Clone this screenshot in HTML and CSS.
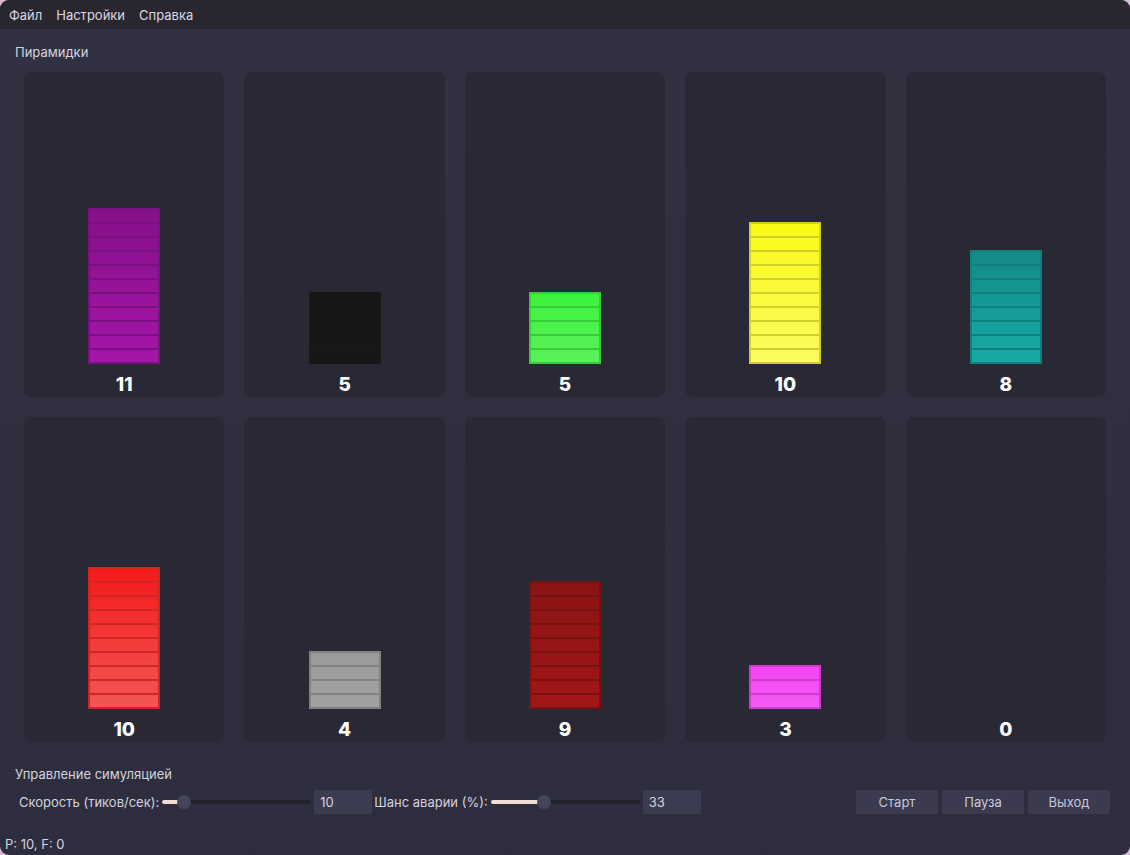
FILE: index.html
```html
<!DOCTYPE html>
<html lang="ru">
<head>
<meta charset="utf-8">
<title>Пирамидки</title>
<link rel="stylesheet" href="styles.css">
</head>
<body>
<div class="window">
  <div class="menubar">
    <span class="menu-item">Файл</span>
    <span class="menu-item">Настройки</span>
    <span class="menu-item">Справка</span>
  </div>
  <div class="content">
    <div class="group-title">Пирамидки</div>
    <div class="grid">
      <div class="card">
        <div class="stack c-purple">
          <div class="blk"></div><div class="blk"></div><div class="blk"></div><div class="blk"></div><div class="blk"></div><div class="blk"></div><div class="blk"></div><div class="blk"></div><div class="blk"></div><div class="blk"></div><div class="blk"></div>
        </div>
        <div class="count">11</div>
      </div>
      <div class="card">
        <div class="stack c-black">
          <div class="blk"></div><div class="blk"></div><div class="blk"></div><div class="blk"></div><div class="blk"></div>
        </div>
        <div class="count">5</div>
      </div>
      <div class="card">
        <div class="stack c-green">
          <div class="blk"></div><div class="blk"></div><div class="blk"></div><div class="blk"></div><div class="blk"></div>
        </div>
        <div class="count">5</div>
      </div>
      <div class="card">
        <div class="stack c-yellow">
          <div class="blk"></div><div class="blk"></div><div class="blk"></div><div class="blk"></div><div class="blk"></div><div class="blk"></div><div class="blk"></div><div class="blk"></div><div class="blk"></div><div class="blk"></div>
        </div>
        <div class="count">10</div>
      </div>
      <div class="card">
        <div class="stack c-teal">
          <div class="blk"></div><div class="blk"></div><div class="blk"></div><div class="blk"></div><div class="blk"></div><div class="blk"></div><div class="blk"></div><div class="blk"></div>
        </div>
        <div class="count">8</div>
      </div>
      <div class="card">
        <div class="stack c-red">
          <div class="blk"></div><div class="blk"></div><div class="blk"></div><div class="blk"></div><div class="blk"></div><div class="blk"></div><div class="blk"></div><div class="blk"></div><div class="blk"></div><div class="blk"></div>
        </div>
        <div class="count">10</div>
      </div>
      <div class="card">
        <div class="stack c-grey">
          <div class="blk"></div><div class="blk"></div><div class="blk"></div><div class="blk"></div>
        </div>
        <div class="count">4</div>
      </div>
      <div class="card">
        <div class="stack c-darkred">
          <div class="blk"></div><div class="blk"></div><div class="blk"></div><div class="blk"></div><div class="blk"></div><div class="blk"></div><div class="blk"></div><div class="blk"></div><div class="blk"></div>
        </div>
        <div class="count">9</div>
      </div>
      <div class="card">
        <div class="stack c-magenta">
          <div class="blk"></div><div class="blk"></div><div class="blk"></div>
        </div>
        <div class="count">3</div>
      </div>
      <div class="card">
        <div class="count">0</div>
      </div>
    </div>

    <div class="group-title second">Управление симуляцией</div>
    <div class="controls">
      <span class="ctl-label">Скорость (тиков/сек):</span>
      <div class="slider">
        <div class="track"></div>
        <div class="fill" style="width: 22px"></div>
        <div class="handle" style="left: 15px"></div>
      </div>
      <div class="field">10</div>
      <span class="ctl-label">Шанс аварии (%):</span>
      <div class="slider">
        <div class="track"></div>
        <div class="fill" style="width: 53px"></div>
        <div class="handle" style="left: 46px"></div>
      </div>
      <div class="field">33</div>
      <div class="spacer"></div>
      <div class="btn">Старт</div>
      <div class="btn">Пауза</div>
      <div class="btn">Выход</div>
    </div>
  </div>
  <div class="status">P: 10, F: 0</div>
</div>
</body>
</html>
```

FILE: styles.css
```css
html, body {
  margin: 0;
  padding: 0;
  height: 100%;
}
body {
  background: #d9b8d2;
  font-family: "Inter", "Noto Sans", "DejaVu Sans", sans-serif;
  font-size: 13px;
  color: #d4d3e0;
}
.window {
  width: 1130px;
  height: 855px;
  display: flex;
  flex-direction: column;
  border-radius: 9px;
  overflow: hidden;
  background: linear-gradient(180deg, #323142 0%, #2e2d3d 100%);
}
.menubar {
  height: 29px;
  flex: none;
  display: flex;
  align-items: center;
  padding-left: 2px;
  background: #29262f;
}
.menu-item {
  padding: 0 7px;
  line-height: 16px;
  color: #dad8e4;
}
.content {
  padding: 15px 15px 0 15px;
  display: flex;
  flex-direction: column;
}
.group-title {
  line-height: 16px;
  height: 16px;
  color: #d4d3df;
}
.group-title.second {
  margin-top: 24px;
}
.grid {
  margin: 12px 9px 0 9px;
  display: grid;
  grid-template-columns: repeat(5, 1fr);
  grid-auto-rows: 325px;
  gap: 20px;
}
.card {
  background: #292935;
  border-radius: 8px;
  display: flex;
  flex-direction: column;
  align-items: center;
  justify-content: flex-end;
  padding-bottom: 1px;
}
.stack {
  width: 68px;
  border: 2px solid var(--edge);
  background: linear-gradient(180deg, var(--top), var(--bot));
  margin-bottom: 10px;
}
.blk {
  height: 12px;
}
.blk + .blk {
  border-top: 2px solid var(--edge);
}
.count {
  font-size: 19px;
  font-weight: 800;
  line-height: 22px;
  color: #ffffff;
}
.c-purple { --top: #86108a; --bot: #a515a8; --edge: #7a1180; }
.c-black { --top: #161616; --bot: #171717; --edge: #181818; border-radius: 2px; }
.c-green { --top: #3cf43c; --bot: #5cf05c; --edge: #38cc38; }
.c-yellow { --top: #fafa14; --bot: #fbfb64; --edge: #d0d02c; }
.c-teal { --top: #148a88; --bot: #18aaa6; --edge: #10807e; }
.c-red { --top: #f41a1a; --bot: #f25656; --edge: #d02626; }
.c-grey { --top: #9a9a9a; --bot: #a2a2a2; --edge: #828282; }
.c-darkred { --top: #8a1414; --bot: #a21616; --edge: #761212; }
.c-magenta { --top: #f444f4; --bot: #f45cf4; --edge: #cc3ccc; }

.controls {
  margin: 8px 5px 0 4px;
  height: 24px;
  display: flex;
  align-items: center;
}
.ctl-label {
  color: #d4d3df;
  margin-right: 3px;
}
.slider {
  position: relative;
  width: 149px;
  height: 24px;
  margin-right: 3px;
}
.track {
  position: absolute;
  left: 0;
  right: 0;
  top: 10px;
  height: 4px;
  border-radius: 2px;
  background: #22222c;
}
.fill {
  position: absolute;
  left: 0;
  top: 10px;
  height: 4px;
  border-radius: 2px;
  background: #f2ddd6;
}
.handle {
  position: absolute;
  top: 5px;
  width: 14px;
  height: 14px;
  border-radius: 50%;
  background: #44445a;
}
.field {
  width: 52px;
  height: 24px;
  padding-left: 6px;
  line-height: 24px;
  background: #3c3c50;
  border-radius: 1px;
  color: #d4d3df;
  margin-right: 2px;
}
.spacer {
  flex: 1;
}
.btn {
  width: 82px;
  height: 24px;
  line-height: 24px;
  text-align: center;
  background: #3b3a4e;
  border-radius: 2px;
  color: #c9c8da;
  margin-left: 4px;
}
.status {
  margin-top: auto;
  padding: 0 0 3px 5px;
  line-height: 16px;
  color: #d4d3df;
}
```
